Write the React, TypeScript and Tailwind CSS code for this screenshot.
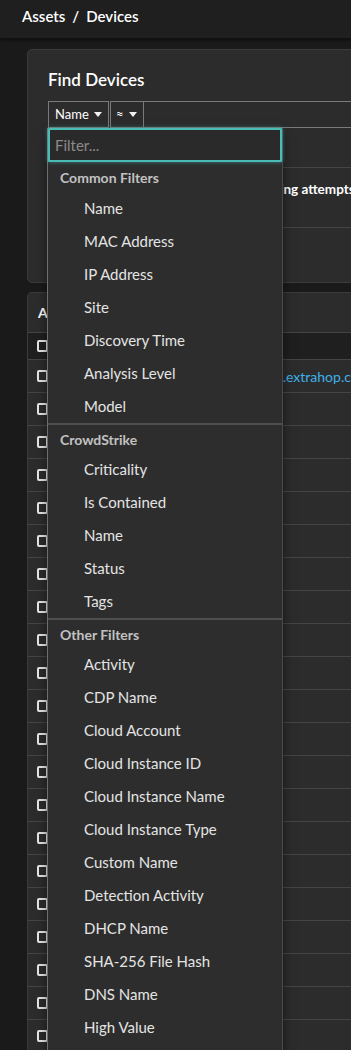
import { Fragment } from 'react'

const groups = [
  {
    title: 'Common Filters',
    items: ['Name', 'MAC Address', 'IP Address', 'Site', 'Discovery Time', 'Analysis Level', 'Model'],
  },
  {
    title: 'CrowdStrike',
    items: ['Criticality', 'Is Contained', 'Name', 'Status', 'Tags'],
  },
  {
    title: 'Other Filters',
    items: [
      'Activity',
      'CDP Name',
      'Cloud Account',
      'Cloud Instance ID',
      'Cloud Instance Name',
      'Cloud Instance Type',
      'Custom Name',
      'Detection Activity',
      'DHCP Name',
      'SHA-256 File Hash',
      'DNS Name',
      'High Value',
      'Hostname',
    ],
  },
]

const Caret = () => (
  <svg width="8" height="5" viewBox="0 0 8 5" className="ml-[5px]">
    <path d="M0 0h8L4 5z" fill="#f2f2f2" />
  </svg>
)

const Checkbox = () => (
  <span className="block h-[12px] w-[11px] rounded-[2px] border-2 border-[#e6e6e6]" />
)

const FilterMenu = () => (
  <div className="absolute left-[-1px] top-[27px] z-10 w-[236px] border-l border-r border-l-[#6e6e6e] border-r-[#4a4a4a] bg-[#2d2d2d] shadow-[0_4px_10px_rgba(0,0,0,0.5)]">
    <div className="h-[34px] rounded-[1px] border-2 border-[#49bdb5] bg-[#2a2a2a] px-[5px] shadow-[0_0_4px_rgba(73,189,181,0.6)]">
      <input
        placeholder="Filter..."
        className="h-full w-full bg-transparent text-[15px] text-white outline-none placeholder:text-[#8a8a8a]"
      />
    </div>
    {groups.map((g, gi) => (
      <Fragment key={g.title}>
        {gi > 0 && <div className="h-[2px] bg-[#4f4f4f]" />}
        <div
          className={`flex items-center pl-[12px] text-[14px] font-bold text-[#c2c2c2] ${
            gi === 0 ? 'h-[30px]' : 'h-[28px]'
          }`}
        >
          {g.title}
        </div>
        {g.items.map((item) => (
          <div key={item} className="flex h-[33px] items-center pl-[36px] text-[15px] text-[#e4e4e4]">
            {item}
          </div>
        ))}
      </Fragment>
    ))}
  </div>
)

export default function App() {
  const rows = Array.from({ length: 21 })

  return (
    <div className="h-[1050px] w-[351px] overflow-hidden bg-[#1a1a1a] font-['Lato','Liberation_Sans',sans-serif]">
      {/* Breadcrumb */}
      <header className="h-[39px] border-b border-[#111] bg-[#1f1f1f] pl-[22px] pt-[7px] text-[15px] font-semibold leading-[18px] text-white shadow-[0_1px_3px_rgba(0,0,0,0.6)]">
        Assets<span className="mx-[7px]">/</span>Devices
      </header>

      <main className="pl-[27px] pt-[10px]">
        {/* Find Devices */}
        <section className="h-[234px] w-[420px] rounded-[5px] border border-[#3b3b3b] bg-[#2c2c2c] pl-[20px] pt-[19px]">
          <h2 className="h-[22px] text-[17px] font-semibold leading-[22px] text-white">Find Devices</h2>
          <div className="mt-[10px] flex h-[27px]">
            <div className="relative flex">
              <button className="flex h-full w-[61px] items-center border border-[#7a7a7a] pl-[6px] text-[13px] text-white">
                Name
                <Caret />
              </button>
              <FilterMenu />
            </div>
            <button className="ml-[1px] flex h-full w-[34px] items-center border border-[#7a7a7a] pl-[5px] text-[13px] text-white">
              ≈
              <Caret />
            </button>
            <div className="h-full flex-1 border-y border-r border-[#7a7a7a]" />
          </div>
          <div className="mt-[39px] h-[61px] border-y border-[#454545] pt-[8px]">
            <span className="ml-[196px] whitespace-nowrap text-[13.5px] font-bold text-white">Scanning attempts</span>
          </div>
        </section>

        {/* Device table */}
        <section className="mt-[9px] w-[420px] rounded-t-[5px] border-x border-t border-[#3b3b3b] bg-[#2c2c2c]">
          <div className="flex h-[40px] items-center border-b border-[#454545] pl-[10px] text-[14px] font-bold text-white">
            All Devices
          </div>
          <div className="flex h-[27px] items-center border-b border-[#454545] bg-[#1f1f1f] pl-[9px]">
            <Checkbox />
          </div>
          {rows.map((_, i) => (
            <div key={i} className="flex h-[33px] items-center border-b border-[#454545] pl-[9px]">
              <Checkbox />
              {i === 0 && (
                <span className="ml-[204px] whitespace-nowrap text-[14px] text-[#3fb1ea]">dc01.extrahop.com</span>
              )}
            </div>
          ))}
        </section>
      </main>
    </div>
  )
}
